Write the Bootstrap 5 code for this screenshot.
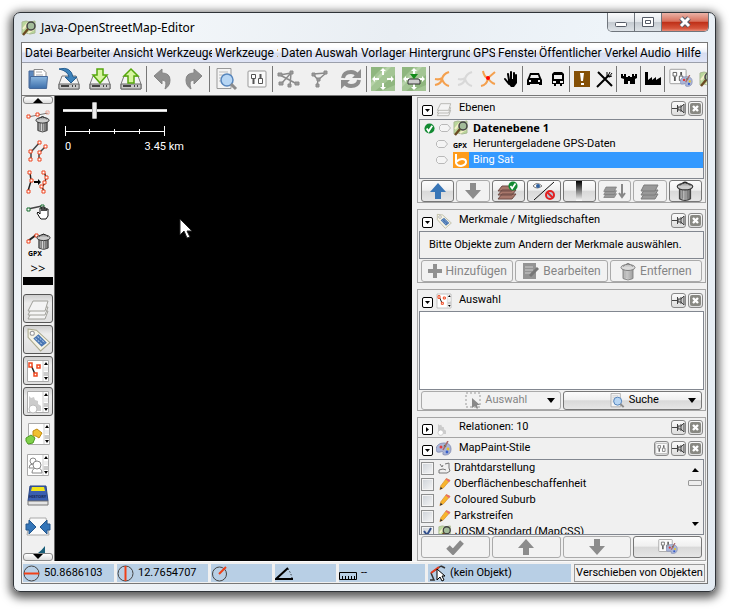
<!DOCTYPE html>
<html lang="de">
<head>
<meta charset="utf-8">
<meta name="viewport" content="width=device-width, initial-scale=1">
<title>Java-OpenStreetMap-Editor</title>
<link href="https://cdn.jsdelivr.net/npm/bootstrap@5.3.0/dist/css/bootstrap.min.css" rel="stylesheet">
<style>
:root{--ui:Roboto,"Liberation Sans",sans-serif;--edge:#828790;--line:#a5a5a5}
body{font:11px/16px var(--ui);color:#000;background:#fff;min-height:100vh;padding:12px 18px 19px 13px;overflow:hidden}
button,input{font:inherit;color:inherit}
button{padding:0;border:0;background:none;border-radius:0}
svg{display:block;flex:none}
.frame{border:1px solid #2f3338;border-radius:7px;background:linear-gradient(105deg,#dce3ea 0,#f4f8fb 12%,#e9eef3 45%,#eef4f9 70%,#e4ebf2);padding:0 7px 7px;box-shadow:0 3px 10px 3px rgba(0,0,0,.65)}
.titlebar{height:29px;font:12px/16px "Noto Sans",sans-serif}
.wctl{height:19px;border:1px solid #70767d;border-top:0;border-radius:0 0 5px 5px;overflow:hidden;margin-right:-1px}
.wctl button{width:27px;background:linear-gradient(#fafbfc,#e3e7eb 48%,#c5cbd1 52%,#dde2e7);border-right:1px solid #70767d}
.wctl .shut{width:46px;border:0;background:linear-gradient(#eab3a7,#d8705c 46%,#bf3018 52%,#d5543b 85%,#e88c78)}
.client{border:1px solid #777;background:#f0f0f0;min-height:0}
.menus{height:20px;background:linear-gradient(#fff 20%,#eef1f9 45%,#d7def1 55%,#dfe4f5);border-bottom:1px solid #9b9fab;padding-left:3px;font-size:12px;overflow:hidden}
.menus button{overflow:hidden;white-space:nowrap;text-align:left;flex:none;margin-right:3px}
.m22{width:22px}.m28{width:28px}.m31{width:31px}.m33{width:33px}.m38{width:38px}.m40{width:40px}.m43{width:43px}.m45{width:45px}.m54{width:54px}.m56{width:56px}.m61{width:61px}.m63{width:63px}.m98{width:98px}
.tools{height:33px;overflow:hidden;border-bottom:1px solid #777}
.tools button{width:31px;height:32px;flex:none}
.tools .slim{width:23px}
.tools i{width:1px;background:#777;flex:none;margin:3px 0}
.side{width:33px;border-right:1px solid #666;overflow:hidden;flex:none}
.side button{height:31px;flex:none}
.side .arrow{height:8px;margin:0 1px;border:1px solid #888;border-radius:3px;background:linear-gradient(#fff,#ddd)}
.side .more{height:18px;font:13px/18px "Noto Sans",sans-serif}
.side .blk{height:8px;background:#000;margin:0 1px 9px}
.side .on{height:29px;margin:0 1px 2px;border:1px solid #555;border-radius:3px;background:linear-gradient(#cfcfcf,#ededed 30%,#e0e0e0)}
.side text,.layers text{font-family:"Noto Sans",sans-serif;font-weight:bold}
.map{background:#000;color:#fff;padding:5px 8px}
.zoomer{appearance:none;display:block;width:104px;height:18px;margin:0;background:linear-gradient(transparent 8px,#aaa 8px,#fff 9px,#fff 10px,#aaa 11px,transparent 11px)}
.zoomer::-webkit-slider-thumb{appearance:none;width:5px;height:17px;background:#eee;border:1px solid #aaa;border-radius:1px}
.scale{width:121px;padding-left:2px}
.pointer{left:124px;top:122px}
.docks{width:295px;padding:1px 1px 0 5px;flex:none}
.dock{border:1px solid var(--line);padding:0 1px;margin-bottom:6px}
.dock-h{height:21px;padding-left:3px;padding-right:1px}
.dock-h.flat{height:19px}
.dock-h .fold{width:11px;height:11px;border:1px solid #000;border-radius:2px;background:#fff;margin:4px 3px 0 0}
.dock-h .cap{padding-left:7px;padding-bottom:1px}
.dock-h .mini{width:15px;height:15px;border:1px solid #888;border-radius:3px;background:linear-gradient(#fafafa,#ddd);margin-left:2px}
.pane{border:1px solid var(--edge)}
.lpane{padding-bottom:10px}
.layers{width:100%;line-height:16px}
.layers td{padding:0;height:16px}
.layers .hot{background:#3399ff;color:#fff}
.layers b{font:bold 11px/16px "Noto Sans",sans-serif}
.acts{padding:1px 2px 0;gap:2px}
.acts.last{padding-bottom:2px}
.acts button{height:22px;flex:1 1 0;border:1px solid #777;border-radius:3px;background:linear-gradient(#fcfcfc,#f0f0f0 45%,#d9d9d9 52%,#e6e6e6)}
.acts.low button{height:19px}
.acts button:disabled{border-color:#aaa;background:#f2f2f2;color:#858585}
.words{font-size:12px}
.hint{height:28px;padding:8px 9px}
.hint div{height:10px;line-height:10px;overflow:hidden;white-space:nowrap}
.sel{background:#fff;min-height:60px}
.styles{height:76px;overflow:hidden}
.styles label{height:16px;padding-left:1px;gap:3px}
.styles input{appearance:none;width:13px;height:13px;border:1px solid #8e8f8f;background:linear-gradient(135deg,#cdd2d8,#f6f6f6);box-shadow:inset 0 0 0 1px #f4f4f4;margin:0 1px 0 0}
.tick{left:3px;top:3px}
.bar{width:16px}
.thumb{height:6px;border:1px solid #999;border-radius:1px;background:#eee;margin:0 1px}
.status{height:22px;padding:2px 2px 1px 1px;gap:3px;border-top:1px solid #fafafa}
.status>div{background:#b8cfe5;overflow:hidden;white-space:nowrap}
.s91{width:91px}.s61{width:61px}.s86{width:86px}
.status .mode{width:131px;background:#f0f0f0;border:1px solid #999;flex:none}
</style>
<script src="https://cdn.jsdelivr.net/npm/bootstrap@5.3.0/dist/js/bootstrap.bundle.min.js"></script>
</head>
<body class="d-flex flex-column">
<svg width="0" height="0" class="position-absolute" aria-hidden="true">
<defs>
<linearGradient id="gb" x2="0" y2="1"><stop stop-color="#8db8e0"/><stop offset="1" stop-color="#3c6eaa"/></linearGradient>
<linearGradient id="gm"><stop stop-color="#666"/><stop offset=".4" stop-color="#e2e2e2"/><stop offset="1" stop-color="#555"/></linearGradient>
<linearGradient id="gk" x2="0" y2="1"><stop/><stop offset="1" stop-color="#fff"/></linearGradient>
</defs>
<symbol id="josm" viewBox="0 0 16 16"><path d="M1 2l4-1 4 1 5-1v12l-5 1-4-1-4 1z" fill="#b9d79b" stroke="#a9b992"/><path d="M2 9l5-6M7 13l6-4" stroke="#f4f0c8" stroke-width="2"/><circle cx="10" cy="6" r="4" fill="#9db59a" fill-opacity=".8" stroke="#444" stroke-width="1.500"/><path d="M7 9l-5 6" stroke="#6b4a22" stroke-width="2.400"/></symbol>
<symbol id="disk" viewBox="0 0 24 24"><path d="M5 9h14l3 8v5H2v-5z" fill="#f4f4f4" stroke="#777"/><path d="M2 17h20v5H2z" fill="#c9c9c9" stroke="#666"/><path d="M4 19h8M15 19h1M18 19h1" stroke="#444" stroke-width="2"/></symbol>
<symbol id="check" viewBox="0 0 12 12"><circle cx="6" cy="6" r="5.500" fill="#128a32"/><path d="M3 6l2 3 4-6" fill="none" stroke="#fff" stroke-width="2"/></symbol>
<symbol id="hex" viewBox="0 0 12 8"><path d="M2.500.5h6L11.500 4l-3 3.500h-6L.5 5.500v-3z" fill="#f4f4f4" stroke="#b8b8b8"/></symbol>
<symbol id="stack" viewBox="0 0 24 24"><g fill="#f4f4f4" stroke="#a0a09a"><path d="M2 22l4-8h16l-3 8z"/><path d="M2 18l4-8h16l-3 8z"/><path d="M2 14l5-10h15l-3 10z"/></g></symbol>
<symbol id="stackg" viewBox="0 0 20 18"><g fill="#999" stroke="#7d7d7d"><path d="M1 17l3-5h14l-3 5z"/><path d="M1 13l3-5h14l-3 5z"/><path d="M1 9l3-6h14l-3 6z"/></g></symbol>
<symbol id="tag" viewBox="0 0 24 24"><path d="M2 2l8 1 13 12-9 8L2 10z" fill="#f6f4e6" stroke="#aaa98e"/><circle cx="6" cy="6" r="2" fill="#fff" stroke="#999"/><path d="M7 11l5-4 8 8-5 4z" fill="#4876b2"/><path d="M9 11l7 6M11 9l7 6" stroke="#a9c1e2" stroke-dasharray="2 1"/></symbol>
<symbol id="can" viewBox="0 0 16 18"><path d="M3 6h10v10q-5 3-10 0z" fill="url(#gm)" stroke="#444"/><path d="M6 8v8M8 8v9M10 8v8" stroke="#777"/><ellipse cx="8" cy="5" rx="7" ry="3" fill="#ccc" stroke="#333"/><path d="M3 4q5-5 10 0" fill="#aaa" stroke="#444"/><path d="M6 2q2-2 4 0" fill="none" stroke="#222"/></symbol>
<symbol id="list" viewBox="0 0 24 24"><path d="M1.500 1.500h21v21h-21z" fill="#fff" stroke="#aaa"/><path d="M17 2v20" stroke="#ccc"/><path d="M17.500 13h5v4h-5z" fill="#ccc"/><path d="M18 6h4l-2-3zM18 18h4l-2 3z"/><path d="M18 8h4v4h-4z" fill="#eee"/></symbol>
<symbol id="nodes" viewBox="0 0 24 24"><path d="M5 6l4 9" stroke="#222" stroke-width="1.500"/><g fill="#fff" stroke="#f04a22" stroke-width="1.500"><path d="M3 4h3v4H3zM11 6h3v3h-3zM8 14h3v3H8z"/></g></symbol>
<symbol id="lens" viewBox="0 0 24 24"><path d="M3 1.500h14v20H3z" fill="#f4f4f4" stroke="#999"/><path d="M5 5h9M5 8h9M5 11h6M5 14h4" stroke="#bbb"/><circle cx="13" cy="13" r="6" fill="#b7d6f4" stroke="#5786bd" stroke-width="1.500"/><path d="M17 17l5 5" stroke="#8c8c8c" stroke-width="3"/></symbol>
<symbol id="pref" viewBox="0 0 20 18"><rect x="1" y="1" width="18" height="16" rx="1" fill="#fafafa" stroke="#999"/><path d="M4.500 4.500h4v4h-4zM11.500 8.500h4v5h-4z" fill="#fff" stroke="#555"/><path d="M6.500 9v5M13.500 4v4" stroke="#555" stroke-width="2"/></symbol>
<symbol id="pal" viewBox="0 0 16 16"><path d="M8 2q7 0 7 6t-6 6q-3 0-2-2t-3-1-4-3q1-6 8-6z" fill="#a9b5d9" stroke="#8d95b8"/><circle cx="5" cy="6" r="1.500" fill="#e23b3b"/><circle cx="9" cy="5" r="1.300" fill="#3a7d3a"/><circle cx="12" cy="8" r="1.400" fill="#e6c22e"/><circle cx="11" cy="11" r="1.400" fill="#375ec9"/><path d="M12 0L7 9" stroke="#a66" stroke-width="1.500"/></symbol>
<symbol id="pin" viewBox="0 0 13 13"><path d="M0 6.500h5M5.500 3v7M6 5h3l3-3v9L9 8H6zM9 3v7" fill="#ccc" stroke="#444"/></symbol>
<symbol id="xx" viewBox="0 0 13 13"><rect x="1" y="1" width="11" height="11" rx="2" fill="#898983"/><path d="M4 4l5 5m0-5L4 9" stroke="#fff" stroke-width="2.400"/></symbol>
<symbol id="up" viewBox="0 0 18 18"><path d="M9 1l8 9h-5v7H6v-7H1z"/></symbol>
<symbol id="pencil" viewBox="0 0 14 14"><path d="M2 13l1-4 6-8 4 2-7 8z" fill="#f7b52c" stroke="#d8892b" stroke-width=".7"/><path d="M9 1l4 2-1 2-4-3z" fill="#e86a70"/><path d="M2 13l1-3 2 2z" fill="#333"/></symbol>
<symbol id="gear" viewBox="0 0 24 24"><path d="M3 6l2 2 3-1 1 3 3 1v3l3 2v5H3z" fill="#ccc"/><circle cx="7" cy="19" r="4" fill="#fff" stroke="#bbb"/></symbol>
<symbol id="way" viewBox="0 0 16 18"><path d="M1 15q6-1 7-6t7-7M1 9q5 1 7-1M8 9q2 6 7 7" fill="none" stroke="currentColor" stroke-width="2.200"/></symbol>
<symbol id="field" viewBox="0 0 24 24"><path d="M0 0h24v24H0z" fill="#a3c594"/><path d="M0 0h12L0 12zM24 8v10L10 24H4z" fill="#8fb67f"/><path d="M0 16L16 0h4L0 20z" fill="#b7d3a9"/><path d="M12 1l3 3h-2v4h-2V4H9zM12 23l3-3h-2v-4h-2v4H9zM1 12l3-3v2h4v2H4v2zM23 12l-3-3v2h-4v2h4v2z" fill="#fff"/></symbol>
</svg>

<main class="frame d-flex flex-column flex-grow-1">
<header class="titlebar d-flex">
<div class="d-flex align-items-center flex-grow-1 gap-1"><svg width="16" height="16"><use href="#josm"/></svg><span>Java-OpenStreetMap-Editor</span></div>
<div class="wctl d-flex">
<button aria-label="Minimieren"><svg width="26" height="18"><rect x="7.500" y="9.500" width="11" height="4" rx="1" fill="#fff" stroke="#555b66"/></svg></button>
<button aria-label="Maximieren"><svg width="26" height="18"><path d="M7.500 4.500h11v9h-11zM10.500 7.500h5v3h-5z" fill="#fff" stroke="#555b66"/></svg></button>
<button class="shut" aria-label="Schließen"><svg width="46" height="18"><path d="M19 5l8 8m0-8l-8 8" stroke="#555b66" stroke-width="5"/><path d="M19 5l8 8m0-8l-8 8" stroke="#fff" stroke-width="3"/></svg></button>
</div>
</header>
<div class="client d-flex flex-column flex-grow-1">
<nav class="menus d-flex" aria-label="Menü">
<button class="m28">Datei</button><button class="m54">Bearbeiten</button><button class="m40">Ansicht</button><button class="m56">Werkzeuge</button><button class="m63">Werkzeuge 2</button><button class="m31">Daten</button><button class="m43">Auswahl</button><button class="m45">Vorlagen</button><button class="m61">Hintergrund</button><button class="m22">GPS</button><button class="m38">Fenster</button><button class="m98">Öffentlicher Verkehr</button><button class="m33">Audio</button><button class="m33">Hilfe</button>
</nav>
<div class="tools d-flex" role="toolbar" aria-label="Werkzeuge">
<button aria-label="Öffnen" class="d-flex align-items-center justify-content-center"><svg width="24" height="24"><path d="M3 21V4h5l2 3" fill="#5c88bd" stroke="#46699a"/><path d="M8 2.500h9l3 3V16H8z" fill="#fff" stroke="#888"/><path d="M10 5h6M10 8h7" stroke="#aaa"/><path d="M3.500 21.500l1-12h17l-1 12z" fill="url(#gb)" stroke="#46699a"/></svg></button>
<button aria-label="Speichern" class="d-flex align-items-center justify-content-center"><svg width="24" height="24"><use href="#disk" width="24" height="24"/><path d="M2 2q12-3 14 8h4l-6 6-6-6h4Q11 4 2 2z" fill="#3d83bb" stroke="#285f91"/></svg></button>
<button aria-label="Herunterladen" class="d-flex align-items-center justify-content-center"><svg width="24" height="24"><use href="#disk" width="24" height="24"/><path d="M9 2h6v6h4l-7 8-7-8h4z" fill="#d7f5a0" stroke="#55a70c" stroke-width="1.500"/></svg></button>
<button aria-label="Hochladen" class="d-flex align-items-center justify-content-center"><svg width="24" height="24"><use href="#disk" width="24" height="24"/><path d="M9 16h6V9h4l-7-7-7 7h4z" fill="#d7f5a0" stroke="#55a70c" stroke-width="1.500"/></svg></button>
<i></i>
<button aria-label="Rückgängig" class="d-flex align-items-center justify-content-center"><svg width="20" height="22"><path d="M1 8l8-7v4q8 0 8 7 0 6-5 9 3-9-3-9v4z" fill="#909090" stroke="#858585"/></svg></button>
<button aria-label="Wiederholen" class="d-flex align-items-center justify-content-center"><svg width="20" height="22"><path d="M18 8l-8-7v4q-8 0-8 7 0 6 5 9-3-9 3-9v4z" fill="#909090" stroke="#858585"/></svg></button>
<i></i>
<button aria-label="Suchen" class="d-flex align-items-center justify-content-center"><svg width="24" height="24"><use href="#lens"/></svg></button>
<button aria-label="Einstellungen" class="d-flex align-items-center justify-content-center"><svg width="20" height="18"><use href="#pref"/></svg></button>
<i></i>
<button aria-label="Linie teilen" class="d-flex align-items-center justify-content-center"><svg width="24" height="20" fill="none" stroke="#8a8a8a" stroke-width="1.500"><path d="M3 6l11-2M3 6l17 9M14 4L4 15M14 4l-1 13"/><path d="M1 4h4v3H1zM13 2h3v3h-3zM18 13h4v3h-4zM2 13h4v3H2zM11 15h3v3h-3z" fill="#999" stroke-width="1"/></svg></button>
<button aria-label="Linien verbinden" class="d-flex align-items-center justify-content-center"><svg width="20" height="20" fill="none" stroke="#8a8a8a" stroke-width="1.500"><path d="M3 5l13-1M3 5l5 6 8-7M8 11l-1 6"/><path d="M2 4h3v3H2zM14 2h3v3h-3zM7 9h3v3H7zM6 15h3v3H6z" fill="#999" stroke-width="1"/></svg></button>
<button aria-label="Aktualisieren" class="d-flex align-items-center justify-content-center"><svg width="22" height="22" fill="none" stroke="#8d8d8d" stroke-width="4"><path d="M3 10q1-6 8-6 4 0 6 3M19 12q-1 6-8 6-4 0-6-3"/><path d="M12 10h9V1zM10 12H1v9z" fill="#8d8d8d" stroke="none"/></svg></button>
<i></i>
<button aria-label="Ansicht einpassen" class="d-flex align-items-center justify-content-center"><svg width="24" height="24"><use href="#field"/></svg></button>
<button aria-label="Ansicht herunterladen" class="d-flex align-items-center justify-content-center"><svg width="24" height="24"><use href="#field"/><path d="M7 12h10l1 2v3H6v-3z" fill="#ccc" stroke="#333"/><path d="M8 7h8l-4 5z" fill="#128b18"/></svg></button>
<i></i>
<button aria-label="Weg" class="slim d-flex align-items-center justify-content-center"><svg width="16" height="18" color="#f4a04e"><use href="#way"/></svg></button>
<button aria-label="Weg inaktiv" class="slim d-flex align-items-center justify-content-center"><svg width="16" height="18" color="#d8d8d8"><use href="#way"/></svg></button>
<button aria-label="Kreuzung" class="slim d-flex align-items-center justify-content-center"><svg width="16" height="18" color="#f4a04e"><path d="M1 16q6-1 7-8Q4 7 3 1M8 8l7-6M8 8q3 5 7 6" fill="none" stroke="#f4a04e" stroke-width="2"/><circle cx="8" cy="8" r="2" fill="#f00"/></svg></button>
<button aria-label="Hand" class="slim d-flex align-items-center justify-content-center"><svg width="16" height="18" fill="none" stroke="#000" stroke-width="2" stroke-linecap="round"><path d="M6 10L5 4M8 9V2M11 9V3M13 10V5M2 9l4 5"/><path d="M6 9h8v4l-3 4H8l-4-5z" fill="#000" stroke="none"/></svg></button>
<i></i>
<button aria-label="Auto" class="slim d-flex align-items-center justify-content-center"><svg width="17" height="16"><path fill-rule="evenodd" d="M4 2h9l2 5 1 2v5h-3v-1H4v1H1V9l1-2zM5 4L4 7h9l-1-3zM3 9v2h2V9zm9 0v2h2V9z"/></svg></button>
<button aria-label="Bus" class="slim d-flex align-items-center justify-content-center"><svg width="14" height="16"><path fill-rule="evenodd" d="M3 1h8l2 2v10h-2v2H9v-2H5v2H3v-2H1V3zM3 4v4h8V4zM2 10v2h3v-2zm7 0v2h3v-2z"/></svg></button>
<i></i>
<button aria-label="Warnung" class="slim d-flex align-items-center justify-content-center"><svg width="16" height="16"><path d="M0 0h16v16H0z" fill="#855006"/><path d="M6 2h4L9 10H7zM7 12h3v2H7z" fill="#fff"/></svg></button>
<button aria-label="Gastronomie" class="slim d-flex align-items-center justify-content-center"><svg width="17" height="17" stroke="#000" stroke-width="2"><path d="M2 1l14 14M1 16L13 4"/><path d="M11 1v4q2 2 5 0M14 1l-2 4M16 2l-3 4" fill="none" stroke-width="1"/></svg></button>
<i></i>
<button aria-label="Burg" class="slim d-flex align-items-center justify-content-center"><svg width="16" height="14"><path d="M0 2h2v2h1V2h2v3h2V4h2v1h2V2h2v2h1V2h2v4l-2 1v5H9V9H7v3H3V7L0 6z"/></svg></button>
<i></i>
<button aria-label="Fabrik" class="slim d-flex align-items-center justify-content-center"><svg width="16" height="14"><path d="M0 0h3v8l4-3v3l4-3v3l5-3v8H0z"/></svg></button>
<i></i>
<button aria-label="Stile" class="d-flex align-items-center justify-content-center"><svg width="24" height="22"><use href="#pref" width="18" height="17"/><use href="#pal" x="11" y="7" width="13" height="13"/></svg></button>
<button aria-label="Vorlagen" class="d-flex align-items-center"><svg width="20" height="20"><use href="#josm" x="3" y="1" width="16" height="18"/></svg></button>
</div>
<div class="d-flex flex-grow-1">
<aside class="side d-flex flex-column">
<button class="arrow" aria-label="Nach oben"><svg class="mx-auto" width="10" height="6"><path d="M0 6l5-5 5 5z"/></svg></button>
<button aria-label="Knoten löschen"><svg class="mx-auto" width="28" height="28"><path d="M4 11l20-4" stroke="#777"/><g fill="#fff" stroke="#ee421d"><path d="M3 9h3v3H3zM12 7h3v3h-3z"/><path d="M22 5h3v3h-3z" opacity=".4"/></g><use href="#can" x="11" y="9" width="15" height="18"/></svg></button>
<button aria-label="Parallele Linie"><svg class="mx-auto" width="24" height="24"><path d="M5 21v-8l9-10M13 21v-7l6-6" fill="none" stroke="#444" stroke-width="1.500"/><path d="M3 19h3v3H3zM3 11h3v3H3zM12 2h3v3h-3zM12 19h3v3h-3zM12 12h3v3h-3zM18 6h3v3h-3z" fill="#fff" stroke="#ee421d"/></svg></button>
<button aria-label="Linie verfeinern"><svg class="mx-auto" width="24" height="24"><path d="M4 2l1 9-3 10M18 2l2 5-1 6-3 4 2 4" fill="none" stroke="#222" stroke-width="1.500"/><path d="M8 11h4V9l3 3-3 3v-2H8z"/><path d="M2 1h3v3H2zM4 9h3v3H4zM1 20h3v3H1zM16 1h3v3h-3zM19 6h3v3h-3zM17 11h3v3h-3zM14 15h3v3h-3zM16 20h3v3h-3z" fill="#fff" stroke="#ee421d"/></svg></button>
<button aria-label="Verschieben"><svg class="mx-auto" width="26" height="22"><path d="M3 7l14-3" stroke="#444" stroke-width="1.500"/><path d="M2 6h3v3H2zM16 3h3v3h-3z" fill="#fff" stroke="#146a2c"/><path d="M15 16l-3-5 1-1 2 2V6h2v3-4h2v4-3h2v3-2h2v7l-2 3h-5z" fill="#fff" stroke="#111"/></svg></button>
<button aria-label="GPX löschen"><svg class="mx-auto" width="28" height="28"><path d="M4 11l8-6" stroke="#222" stroke-width="2"/><path d="M3 10h3v3H3zM11 4h3v3h-3z" fill="#fff" stroke="#ee421d"/><use href="#can" x="12" y="3" width="15" height="17"/><text x="4" y="26" font-size="7">GPX</text></svg></button>
<button class="more">&gt;&gt;</button>
<div class="blk"></div>
<button class="on" aria-label="Ebenen"><svg class="mx-auto" width="24" height="24"><use href="#stack"/></svg></button>
<button class="on" aria-label="Merkmale"><svg class="mx-auto" width="25" height="25"><use href="#tag"/></svg></button>
<button class="on" aria-label="Auswahl"><svg class="mx-auto" width="24" height="24"><use href="#list"/><use href="#nodes"/></svg></button>
<button class="on" aria-label="Relationen"><svg class="mx-auto" width="24" height="24"><use href="#list"/><use href="#gear"/></svg></button>
<button aria-label="Konflikte"><svg class="mx-auto" width="26" height="24"><use href="#list" x="2" width="24"/><path d="M8 14V9l4-2 5 4-3 5-3-2z" fill="#f0c030" stroke="#c28a10"/><path d="M1 16l5-3 4 3-2 5-5 1-2-3z" fill="#7fd04a" stroke="#4e9c24"/></svg></button>
<button aria-label="Autoren"><svg class="mx-auto" width="24" height="24"><use href="#list"/><g fill="#fff" stroke="#888"><path d="M3 15q0-4 4-4t4 4z"/><circle cx="7" cy="8" r="3"/><path d="M6 20q0-5 5-5t5 5z"/><circle cx="11" cy="12" r="4"/></g></svg></button>
<button aria-label="Chronik"><svg class="mx-auto" width="24" height="24"><path d="M4 2h16l2 15H2z" fill="#3b5fb0" stroke="#294584"/><path d="M6 3h12l1 4H5z" fill="#f3e51b"/><path d="M2 17h20v4H2z" fill="#e4e4e4" stroke="#777"/><text x="3" y="14" font-size="4" fill="#172654">HISTORY</text></svg></button>
<button aria-label="Ansicht fixieren"><svg class="mx-auto" width="26" height="24"><path d="M5 3h16l3 17H2z" fill="#fafafa" stroke="#aaa"/><path d="M1 9h3V5l7 7-7 7v-4H1zM25 9h-3V5l-7 7 7 7v-4h3z" fill="#3475b8" stroke="#23578d"/></svg></button>
<div class="flex-grow-1 overflow-hidden d-flex align-items-end justify-content-end pe-1"><svg width="16" height="7"><path d="M4 7Q8 4 11 0v7z" fill="#195e79"/></svg></div>
<button class="arrow" aria-label="Nach unten"><svg class="mx-auto" width="10" height="6"><path d="M0 0l5 5 5-5z"/></svg></button>
</aside>
<section class="map flex-grow-1 position-relative" aria-label="Karte">
<input class="zoomer" type="range" min="0" max="100" value="29" aria-label="Zoomstufe">
<div class="scale"><svg width="100" height="16" class="mt-1" fill="none" stroke="#fff"><path d="M.5 3v10M99.500 3v10M0 8.500h100M24.500 6v5M49.500 6v5M74.500 6v5"/></svg><div class="d-flex justify-content-between"><span>0</span><span>3.45 km</span></div></div>
<svg class="pointer position-absolute" width="14" height="21"><path d="M1 1v16l4-4 3 7 3-1-3-6h5z" fill="#fff" stroke="#222"/></svg>
</section>
<section class="docks d-flex flex-column">
<article class="dock">
<div class="dock-h d-flex align-items-center"><button class="fold" aria-label="Ebenen einklappen"><svg width="9" height="9"><path d="M2 3h5L4.500 6z"/></svg></button><svg width="16" height="16"><use href="#stack"/></svg><span class="cap flex-grow-1">Ebenen</span><button class="mini" aria-label="Anheften"><svg width="13" height="13"><use href="#pin"/></svg></button><button class="mini" aria-label="Schließen"><svg width="13" height="13"><use href="#xx"/></svg></button></div>
<div class="pane lpane"><table class="layers"><tbody>
<tr><td class="m33"><div class="d-flex gap-1 align-items-center"><svg width="11" height="11" class="ms-1"><use href="#check"/></svg><svg width="12" height="8"><use href="#hex"/></svg></div></td><td><div class="d-flex gap-1"><svg width="16" height="16"><use href="#josm"/></svg><b>Datenebene 1</b></div></td></tr>
<tr><td><svg class="ms-3" width="12" height="8"><use href="#hex"/></svg></td><td><div class="d-flex gap-1"><svg width="16" height="16"><text x="0" y="12" font-size="7">GPX</text></svg><span>Heruntergeladene GPS-Daten</span></div></td></tr>
<tr><td><svg class="ms-3" width="12" height="8"><use href="#hex"/></svg></td><td class="hot"><div class="d-flex gap-1"><svg width="16" height="16"><path d="M0 0h16v16H0z" fill="#ff9c1b"/><path d="M3 2v9q1 3 5 3 5-1 5-4 0-3-4-3-3 0-6 3" fill="none" stroke="#fff" stroke-width="2"/></svg><span>Bing Sat</span></div></td></tr>
</tbody></table></div>
<div class="acts d-flex">
<button aria-label="Nach oben"><svg class="mx-auto" width="18" height="18" fill="#3976b7"><use href="#up"/></svg></button>
<button disabled aria-label="Nach unten"><svg class="mx-auto" width="18" height="18" fill="#8c8c8c"><path d="M9 17l8-9h-5V1H6v7H1z"/></svg></button>
<button aria-label="Aktivieren"><svg class="mx-auto" width="22" height="20"><g fill="#a8776b" stroke="#6e4c46"><path d="M1 18l4-5h14l-4 5zM1 14l4-5h14l-4 5zM1 10l4-5h14l-4 5z"/></g><use href="#check" x="11" y="0" width="10" height="10"/></svg></button>
<button aria-label="Sichtbarkeit"><svg class="mx-auto" width="28" height="20"><path d="M4 19L24 1" stroke="#111"/><path d="M3 5q4-5 9 0-5 4-9 0z" fill="#fff" stroke="#777"/><circle cx="8" cy="5" r="2" fill="#3161a0"/><circle cx="20" cy="14" r="4" fill="#b9c5d8" stroke="#e22020" stroke-width="2"/><path d="M17 11l6 6" stroke="#e22020" stroke-width="2"/></svg></button>
<button aria-label="Deckkraft"><svg class="mx-auto" width="6" height="20"><path d="M0 0h6v20H0z" fill="url(#gk)"/></svg></button>
<button disabled aria-label="Vereinen"><svg class="mx-auto" width="24" height="18"><use href="#stackg" width="15" height="15" y="2"/><path d="M19 2v12M16 11l3 4 3-4" fill="none" stroke="#888" stroke-width="2"/></svg></button>
<button disabled aria-label="Duplizieren"><svg class="mx-auto" width="20" height="18"><use href="#stackg"/></svg></button>
<button aria-label="Löschen"><svg class="mx-auto" width="18" height="20"><use href="#can"/></svg></button>
</div>
</article>
<article class="dock">
<div class="dock-h d-flex align-items-center"><button class="fold" aria-label="Merkmale einklappen"><svg width="9" height="9"><path d="M2 3h5L4.500 6z"/></svg></button><svg width="16" height="16"><use href="#tag"/></svg><span class="cap flex-grow-1">Merkmale / Mitgliedschaften</span><button class="mini" aria-label="Anheften"><svg width="13" height="13"><use href="#pin"/></svg></button><button class="mini" aria-label="Schließen"><svg width="13" height="13"><use href="#xx"/></svg></button></div>
<div class="pane hint"><div>Bitte Objekte zum Ändern der Merkmale auswählen.</div></div>
<div class="acts words d-flex">
<button disabled class="d-flex align-items-center justify-content-center gap-1"><svg width="14" height="14"><path d="M5 0h4v5h5v4H9v5H5V9H0V5h5z" fill="#919191"/></svg>Hinzufügen</button>
<button disabled class="d-flex align-items-center justify-content-center gap-1"><svg width="17" height="18"><path d="M1 1h13v16H1z" fill="#949494"/><path d="M3 5h8M3 8h8M3 11h6" stroke="#ccc"/><path d="M8 14l8-8" stroke="#777" stroke-width="3"/></svg>Bearbeiten</button>
<button disabled class="d-flex align-items-center justify-content-center gap-1"><svg width="16" height="19" opacity=".6"><use href="#can"/></svg>Entfernen</button>
</div>
</article>
<article class="dock d-flex flex-column flex-grow-1">
<div class="dock-h d-flex align-items-center"><button class="fold" aria-label="Auswahl einklappen"><svg width="9" height="9"><path d="M2 3h5L4.500 6z"/></svg></button><svg width="16" height="16"><use href="#list"/><use href="#nodes"/></svg><span class="cap flex-grow-1">Auswahl</span><button class="mini" aria-label="Anheften"><svg width="13" height="13"><use href="#pin"/></svg></button><button class="mini" aria-label="Schließen"><svg width="13" height="13"><use href="#xx"/></svg></button></div>
<div class="pane sel flex-grow-1"></div>
<div class="acts low d-flex">
<button disabled class="d-flex align-items-center"><span class="d-flex flex-grow-1 justify-content-center gap-1 ps-4"><svg width="16" height="17"><path d="M1 1h14v14H1z" fill="none" stroke="#999" stroke-dasharray="2 2"/><path d="M7 6v10l3-2 2 3 1-1-1-3h3z" fill="#888"/></svg>Auswahl</span><svg class="me-1" width="9" height="6" fill="#000"><path d="M0 0h8L4 5z"/></svg></button>
<button class="d-flex align-items-center"><span class="d-flex flex-grow-1 justify-content-center gap-1 ps-3"><svg width="16" height="17"><use href="#lens"/></svg>Suche</span><svg class="me-1" width="9" height="6"><path d="M0 0h8L4 5z"/></svg></button>
</div>
</article>
<article class="dock mb-0">
<div class="dock-h flat d-flex align-items-center"><button class="fold" aria-label="Relationen ausklappen"><svg width="9" height="9"><path d="M3 2v5l3-2.500z"/></svg></button><svg width="16" height="16"><use href="#gear"/></svg><span class="cap flex-grow-1">Relationen: 10</span><button class="mini" aria-label="Anheften"><svg width="13" height="13"><use href="#pin"/></svg></button><button class="mini" aria-label="Schließen"><svg width="13" height="13"><use href="#xx"/></svg></button></div>
</article>
<article class="dock border-top-0 mb-0">
<div class="dock-h d-flex align-items-center"><button class="fold" aria-label="MapPaint-Stile einklappen"><svg width="9" height="9"><path d="M2 3h5L4.500 6z"/></svg></button><svg width="16" height="16"><use href="#pal"/></svg><span class="cap flex-grow-1">MapPaint-Stile</span><button class="mini" aria-label="Einstellungen"><svg width="13" height="13"><use href="#pref"/></svg></button><button class="mini" aria-label="Anheften"><svg width="13" height="13"><use href="#pin"/></svg></button><button class="mini" aria-label="Schließen"><svg width="13" height="13"><use href="#xx"/></svg></button></div>
<div class="pane styles d-flex">
<div class="flex-grow-1">
<label class="d-flex align-items-center"><input type="checkbox"><svg width="13" height="12" fill="none" stroke="#777"><path d="M2 2l2 3 1-2M7 2l4-1v5l1 3-3 2H1V8l4-1 3 1"/></svg>Drahtdarstellung</label>
<label class="d-flex align-items-center"><input type="checkbox"><svg width="13" height="14"><use href="#pencil"/></svg>Oberflächenbeschaffenheit</label>
<label class="d-flex align-items-center"><input type="checkbox"><svg width="13" height="14"><use href="#pencil"/></svg>Coloured Suburb</label>
<label class="d-flex align-items-center"><input type="checkbox"><svg width="13" height="14"><use href="#pencil"/></svg>Parkstreifen</label>
<label class="d-flex align-items-center position-relative"><input type="checkbox" checked><svg class="tick position-absolute" width="10" height="10"><path d="M1 4l3 4 4-7" fill="none" stroke="#304e8c" stroke-width="2"/></svg><svg width="14" height="14"><use href="#josm"/></svg>JOSM Standard (MapCSS)</label>
</div>
<div class="bar d-flex flex-column"><svg class="mx-auto mt-2" width="7" height="4"><path d="M0 4l3-4 4 4z"/></svg><div class="thumb mt-2"></div><svg class="mx-auto mt-auto mb-2" width="7" height="4"><path d="M0 0l3 4 4-4z"/></svg></div>
</div>
<div class="acts last d-flex">
<button disabled aria-label="Aktivieren"><svg class="mx-auto" width="18" height="16"><path d="M2 8l5 5 9-10" fill="none" stroke="#8a8a8a" stroke-width="5"/></svg></button>
<button disabled aria-label="Nach oben"><svg class="mx-auto" width="18" height="18" fill="#8c8c8c"><use href="#up"/></svg></button>
<button disabled aria-label="Nach unten"><svg class="mx-auto" width="18" height="18" fill="#8c8c8c"><path d="M9 17l8-9h-5V1H6v7H1z"/></svg></button>
<button aria-label="Stil-Einstellungen"><svg class="mx-auto" width="20" height="18"><use href="#pref" width="15" height="15"/><use href="#pal" x="8" y="5" width="12" height="12"/></svg></button>
</div>
</article>
</section>
</div>
<footer class="status d-flex">
<div class="s91 d-flex align-items-center gap-1"><svg width="17" height="17"><circle cx="8.500" cy="8.500" r="7.500" fill="none" stroke="#444"/><path d="M1 8.500h15" stroke="#f04018" stroke-width="2"/></svg>50.8686103</div>
<div class="s91 d-flex align-items-center gap-1"><svg width="17" height="17"><circle cx="8.500" cy="8.500" r="7.500" fill="none" stroke="#444"/><path d="M8.500 1v15" stroke="#f04018" stroke-width="2"/></svg>12.7654707</div>
<div class="s61 d-flex align-items-center"><svg width="18" height="17"><circle cx="8.500" cy="9" r="7" fill="none" stroke="#444"/><path d="M8 9l7-7" stroke="#f04018" stroke-width="2"/></svg></div>
<div class="s61 d-flex align-items-center"><svg width="18" height="17" fill="none" stroke="#000"><path d="M13 3L1 14h17" stroke-width="2"/><path d="M13 4q3 4 4 9" stroke-dasharray="1 2"/></svg></div>
<div class="s86 d-flex align-items-center gap-1"><svg width="18" height="17"><path d="M.5 7.500h17v7H.5zM3.500 14v-3M6.500 14v-3M9.500 14v-3M12.500 14v-3M15.500 14v-3" fill="none" stroke="#000"/></svg>--</div>
<div class="flex-grow-1 d-flex align-items-center gap-1"><svg width="18" height="18"><path d="M3 9l10-7M3 9l3 7H2M13 2l4 2" fill="none" stroke="#333" stroke-width="1.500"/><path d="M3 9l8-6" stroke="#e43b20" stroke-width="2"/><path d="M9 5v11l3-3 2 4 2-1-2-4h3z" fill="#fff" stroke="#000"/></svg>(kein Objekt)</div>
<div class="mode d-flex align-items-center justify-content-center">Verschieben von Objekten</div>
</footer>
</div>
</main>
</body>
</html>
